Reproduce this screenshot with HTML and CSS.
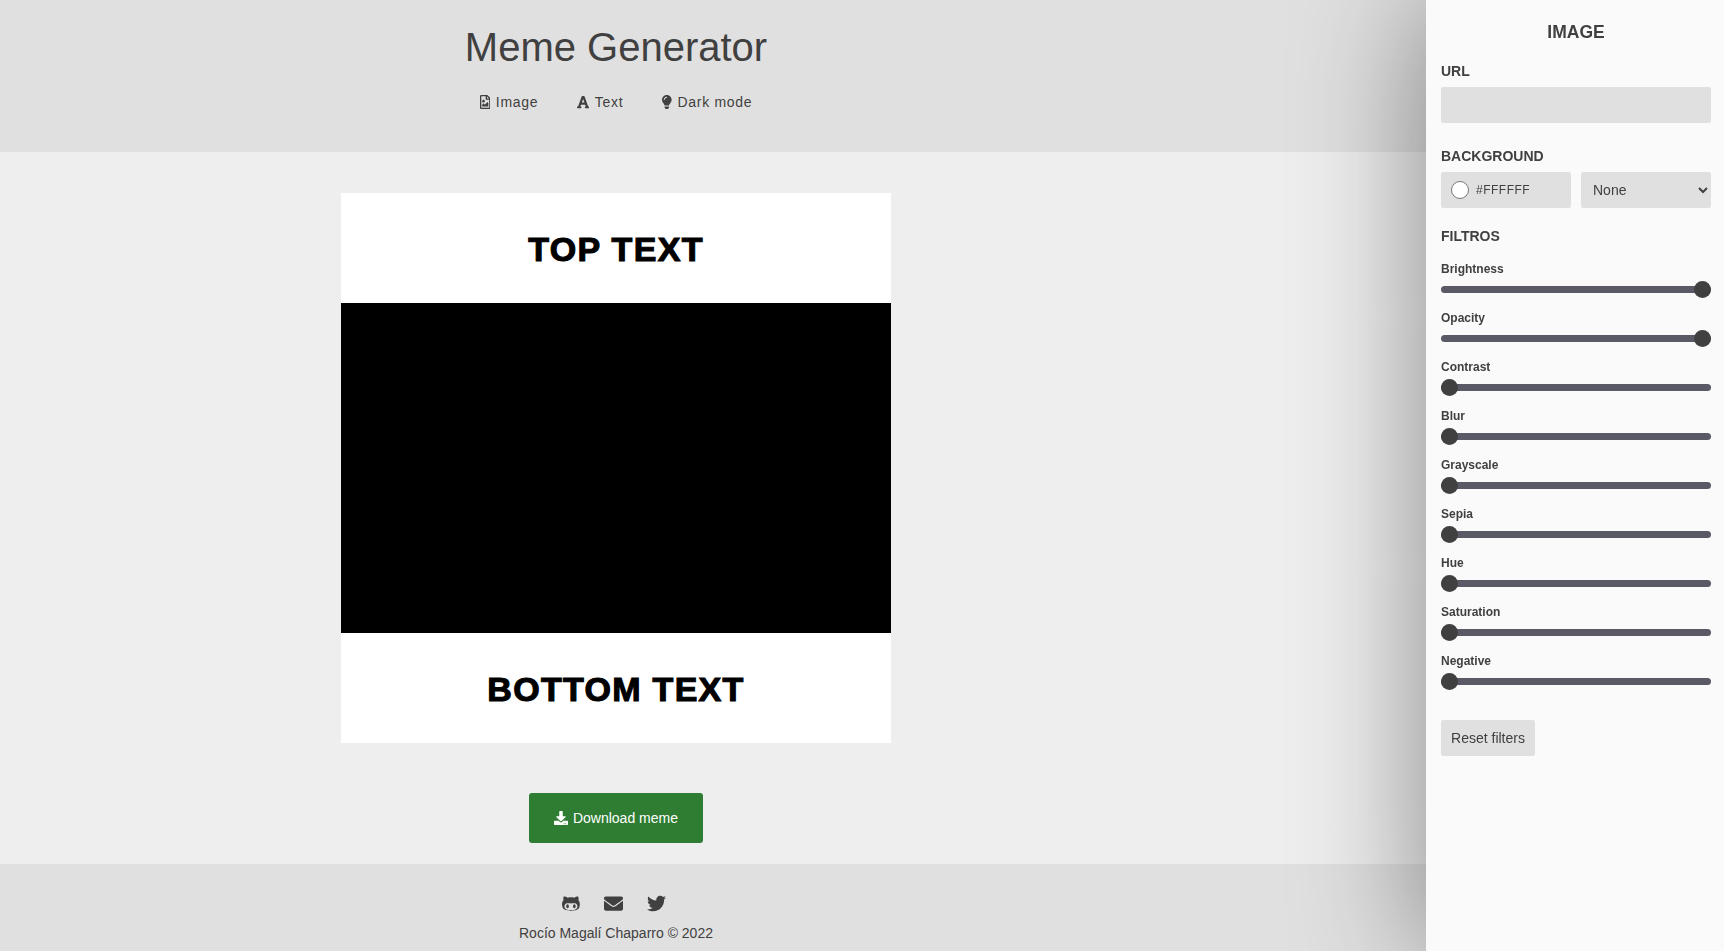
FILE: index.html
```html
<!DOCTYPE html>
<html lang="es">
<head>
    <meta charset="UTF-8">
    <meta name="viewport" content="width=device-width, initial-scale=1.0">
    <title>Meme Generator</title>
    <link rel="stylesheet" href="styles.css">
</head>
<body>
    <header class="header">
        <div class="inner">
            <h1>Meme Generator</h1>
            <nav class="nav">
                <a href="#">
                    <svg class="icon" viewBox="0 0 384 512"><path d="M369.9 97.9L286 14C277 5 264.8-.1 252.1-.1H48C21.5 0 0 21.5 0 48v416c0 26.5 21.5 48 48 48h288c26.5 0 48-21.5 48-48V131.9c0-12.7-5.1-25-14.1-34zM332.1 128H256V51.9l76.1 76.1zM48 464V48h160v104c0 13.3 10.7 24 24 24h104v288H48zm32-48h224V288l-23.5-23.5c-4.7-4.7-12.3-4.7-17 0L176 352l-39.5-39.5c-4.7-4.7-12.3-4.7-17 0L80 352v64zm48-240c-26.5 0-48 21.5-48 48s21.5 48 48 48 48-21.5 48-48-21.5-48-48-48z"/></svg>
                    Image
                </a>
                <a href="#">
                    <svg class="icon" viewBox="0 0 448 512"><path d="M432 416h-23.41L277.88 53.69A32 32 0 0 0 247.58 32h-47.16a32 32 0 0 0-30.3 21.69L39.41 416H16a16 16 0 0 0-16 16v32a16 16 0 0 0 16 16h128a16 16 0 0 0 16-16v-32a16 16 0 0 0-16-16h-19.6l23.3-64h152.6l23.3 64H304a16 16 0 0 0-16 16v32a16 16 0 0 0 16 16h128a16 16 0 0 0 16-16v-32a16 16 0 0 0-16-16zM176.85 272L224 142.51 271.15 272z"/></svg>
                    Text
                </a>
                <a href="#">
                    <svg class="icon" viewBox="0 0 352 512"><path d="M96.06 454.35c.01 6.29 1.87 12.45 5.36 17.69l17.09 25.69a31.99 31.99 0 0 0 26.64 14.28h61.71a31.99 31.99 0 0 0 26.64-14.28l17.09-25.69a31.989 31.989 0 0 0 5.36-17.69l.04-38.35H96.01l.05 38.35zM0 176c0 44.37 16.45 84.85 43.56 115.78 16.52 18.85 42.36 58.23 52.21 91.45.04.26.07.52.11.78h160.24c.04-.26.07-.51.11-.78 9.85-33.22 35.69-72.6 52.21-91.45C335.55 260.85 352 220.37 352 176 352 78.61 272.91-.3 175.45 0 73.44.31 0 82.97 0 176zm176-80c-44.11 0-80 35.89-80 80 0 8.84-7.16 16-16 16s-16-7.16-16-16c0-61.76 50.24-112 112-112 8.84 0 16 7.16 16 16s-7.16 16-16 16z"/></svg>
                    Dark mode
                </a>
            </nav>
        </div>
    </header>

    <main class="main">
        <div class="meme">
            <div class="meme-text">TOP TEXT</div>
            <div class="meme-image"></div>
            <div class="meme-text">BOTTOM TEXT</div>
        </div>
        <button class="download">
            <svg class="icon" viewBox="0 0 512 512"><path d="M216 0h80c13.3 0 24 10.7 24 24v168h87.7c17.8 0 26.7 21.5 14.1 34.1L269.7 378.3c-7.5 7.5-19.8 7.5-27.3 0L90.1 226.1c-12.6-12.6-3.7-34.1 14.1-34.1H192V24c0-13.3 10.7-24 24-24zm296 376v112c0 13.3-10.7 24-24 24H24c-13.3 0-24-10.7-24-24V376c0-13.3 10.7-24 24-24h146.7l49 49c20.1 20.1 52.5 20.1 72.6 0l49-49H488c13.3 0 24 10.7 24 24zm-124 88c0-11-9-20-20-20s-20 9-20 20 9 20 20 20 20-9 20-20zm64 0c0-11-9-20-20-20s-20 9-20 20 9 20 20 20 20-9 20-20z"/></svg>
            Download meme
        </button>
    </main>

    <footer class="footer">
        <div class="inner">
            <div class="social">
                <svg class="icon" viewBox="0 0 480 512"><path d="M186.1 328.7c0 20.9-10.9 55.1-36.7 55.1s-36.7-34.2-36.7-55.1 10.9-55.1 36.7-55.1 36.7 34.2 36.7 55.1zM480 278.2c0 31.9-3.2 65.7-17.5 95-37.9 76.6-142.1 74.8-216.7 74.8-75.8 0-186.2 2.7-225.6-74.8-14.6-29-20.2-63.1-20.2-95 0-41.9 13.9-81.5 41.5-113.6-5.2-15.8-7.7-32.4-7.7-48.8 0-21.5 4.9-32.3 14.6-51.8 45.3 0 74.3 9 108.8 36 29-6.9 58.8-10 88.7-10 27 0 54.2 2.9 80.4 9.2 34-26.7 63-35.2 107.8-35.2 9.8 19.5 14.6 30.3 14.6 51.8 0 16.4-2.6 32.7-7.7 48.2 27.5 32.4 39 72.4 39 114.2zm-64.3 50.5c0-43.9-26.7-82.6-73.5-82.6-18.9 0-37 3.4-56 6-14.9 2.3-29.8 3.2-45.1 3.2-15.2 0-30.1-.9-45.1-3.2-18.7-2.6-37-6-56-6-46.8 0-73.5 38.7-73.5 82.6 0 87.8 80.4 101.3 150.4 101.3h48.2c70.3 0 150.6-13.4 150.6-101.3zm-82.6-55.1c-25.8 0-36.7 34.2-36.7 55.1s10.9 55.1 36.7 55.1 36.7-34.2 36.7-55.1-10.9-55.1-36.7-55.1z"/></svg>
                <svg class="icon" viewBox="0 0 512 512"><path d="M502.3 190.8c3.9-3.1 9.7-.2 9.7 4.7V400c0 26.5-21.5 48-48 48H48c-26.5 0-48-21.5-48-48V195.6c0-5 5.7-7.8 9.7-4.7 22.4 17.4 52.1 39.5 154.1 113.6 21.1 15.4 56.7 47.8 92.2 47.6 35.7.3 72-32.8 92.3-47.6 102-74.1 131.6-96.3 154-113.7zM256 320c23.2.4 56.6-29.2 73.4-41.4 132.7-96.3 142.8-104.7 173.4-128.7 5.8-4.5 9.2-11.5 9.2-18.9v-19c0-26.5-21.5-48-48-48H48C21.5 64 0 85.5 0 112v19c0 7.4 3.4 14.3 9.2 18.9 30.6 23.9 40.7 32.4 173.4 128.7 16.8 12.2 50.2 41.8 73.4 41.4z"/></svg>
                <svg class="icon" viewBox="0 0 512 512"><path d="M459.37 151.716c.325 4.548.325 9.097.325 13.645 0 138.72-105.583 298.558-298.558 298.558-59.452 0-114.68-17.219-161.137-47.106 8.447.974 16.568 1.299 25.34 1.299 49.055 0 94.213-16.568 130.274-44.832-46.132-.975-84.792-31.188-98.112-72.772 6.498.974 12.995 1.624 19.818 1.624 9.421 0 18.843-1.3 27.614-3.573-48.081-9.747-84.143-51.98-84.143-102.985v-1.299c13.969 7.797 30.214 12.67 47.431 13.319-28.264-18.843-46.781-51.005-46.781-87.391 0-19.492 5.197-37.36 14.294-52.954 51.655 63.675 129.3 105.258 216.365 109.807-1.624-7.797-2.599-15.918-2.599-24.04 0-57.828 46.782-104.934 104.934-104.934 30.213 0 57.502 12.67 76.67 33.137 23.715-4.548 46.456-13.32 66.599-25.34-7.798 24.366-24.366 44.833-46.132 57.827 21.117-2.273 41.584-8.122 60.426-16.243-14.292 20.791-32.161 39.308-52.628 54.253z"/></svg>
            </div>
            <p class="credit">Rocío Magalí Chaparro © 2022</p>
        </div>
    </footer>

    <aside class="panel">
        <h2>IMAGE</h2>
        <h3>URL</h3>
        <input class="field" type="text">
        <h3 class="section">BACKGROUND</h3>
        <div class="bg-row">
            <div class="field color-field">
                <span class="swatch"></span>
                <span>#FFFFFF</span>
            </div>
            <select class="field">
                <option>None</option>
            </select>
        </div>
        <h3 class="section filters-title">FILTROS</h3>
        <div class="filter">
            <label>Brightness</label>
            <input type="range" min="0" max="100" value="100">
        </div>
        <div class="filter">
            <label>Opacity</label>
            <input type="range" min="0" max="100" value="100">
        </div>
        <div class="filter">
            <label>Contrast</label>
            <input type="range" min="0" max="100" value="0">
        </div>
        <div class="filter">
            <label>Blur</label>
            <input type="range" min="0" max="100" value="0">
        </div>
        <div class="filter">
            <label>Grayscale</label>
            <input type="range" min="0" max="100" value="0">
        </div>
        <div class="filter">
            <label>Sepia</label>
            <input type="range" min="0" max="100" value="0">
        </div>
        <div class="filter">
            <label>Hue</label>
            <input type="range" min="0" max="100" value="0">
        </div>
        <div class="filter">
            <label>Saturation</label>
            <input type="range" min="0" max="100" value="0">
        </div>
        <div class="filter">
            <label>Negative</label>
            <input type="range" min="0" max="100" value="0">
        </div>
        <button class="reset">Reset filters</button>
    </aside>
</body>
</html>
```

FILE: styles.css
```css
/* General Styles */
* {
    box-sizing: border-box;
}

body {
    margin: 0;
    background: #eeeeee;
    font-family: 'Liberation Sans', Arial, sans-serif;
    color: #404040;
    overflow: hidden;
}

.icon {
    height: 14px;
    width: auto;
    fill: currentColor;
    vertical-align: -2px;
}

/* Content stays left of the panel */
.inner,
.main {
    width: 1232px;
}

/* Header */
.header {
    background: #e0e0e0;
    height: 152px;
    padding-top: 25px;
}

.header h1 {
    margin: 0;
    font-size: 40px;
    font-weight: 400;
    line-height: 44px;
    text-align: center;
}

.nav {
    display: flex;
    justify-content: center;
    gap: 39px;
    margin-top: 25px;
}

.nav a {
    color: #404040;
    text-decoration: none;
    font-size: 14px;
    letter-spacing: 0.7px;
    line-height: 16px;
}

.nav .icon {
    margin-right: 1px;
}

/* Meme */
.main {
    height: 712px;
    padding-top: 41px;
    display: flex;
    flex-direction: column;
    align-items: center;
}

.meme {
    width: 550px;
    background: #fff;
}

.meme-text {
    height: 110px;
    padding-top: 2px;
    display: flex;
    align-items: center;
    justify-content: center;
    font-size: 34px;
    font-weight: 700;
    letter-spacing: 1.3px;
    color: #000;
    -webkit-text-stroke: 1.1px #000;
}

.meme-image {
    height: 330px;
    background: #000;
}

.download {
    margin-top: 50px;
    width: 174px;
    height: 50px;
    background: #2e7d32;
    color: #fff;
    border: none;
    border-radius: 3px;
    font-family: inherit;
    font-size: 14px;
}

.download .icon {
    margin-right: 1px;
}

/* Footer */
.footer {
    background: #e0e0e0;
    height: 87px;
    padding-top: 30px;
}

.social {
    display: flex;
    justify-content: center;
    gap: 24px;
    padding-right: 4px;
}

.social .icon {
    height: 19px;
    display: block;
}

.credit {
    margin: 12px 0 0;
    font-size: 14px;
    line-height: 16px;
    text-align: center;
}

/* Side panel */
.panel {
    position: fixed;
    top: 0;
    right: 0;
    bottom: 0;
    width: 298px;
    padding: 24px 13px 0 15px;
    background: #fafafa;
    box-shadow: 0 0 130px rgba(0, 0, 0, 0.45);
}

.panel h2 {
    margin: 0;
    font-size: 17.5px;
    line-height: 17px;
    text-align: center;
}

.panel h3 {
    margin: 22px 0 0;
    font-size: 14px;
    line-height: 16px;
}

.panel h3.section {
    margin-top: 25px;
}

.panel h3.filters-title {
    margin-top: 20px;
}

.field {
    display: block;
    width: 100%;
    height: 36px;
    margin-top: 8px;
    background: #e0e0e0;
    color: #404040;
    border: none;
    border-radius: 2px;
    font-family: inherit;
    font-size: 14px;
    outline: none;
}

.bg-row {
    display: grid;
    grid-template-columns: 1fr 1fr;
    gap: 10px;
}

.bg-row select {
    padding-left: 8px;
}

.color-field {
    display: flex;
    align-items: center;
    gap: 7px;
    padding-left: 10px;
    font-size: 12px;
    letter-spacing: 0.5px;
}

.swatch {
    width: 18px;
    height: 18px;
    border-radius: 50%;
    background: #fff;
    border: 1px solid #777;
}

.filter {
    height: 49px;
    padding-top: 6px;
}

.filters-title + .filter {
    margin-top: 12px;
}

.filter label {
    display: block;
    font-size: 12px;
    font-weight: 700;
    line-height: 14px;
}

.filter input[type="range"] {
    -webkit-appearance: none;
    appearance: none;
    display: block;
    width: 100%;
    height: 17px;
    margin: 5px 0 0;
    background: transparent;
}

.filter input[type="range"]::-webkit-slider-runnable-track {
    height: 7px;
    border-radius: 4px;
    background: #5a5a66;
}

.filter input[type="range"]::-webkit-slider-thumb {
    -webkit-appearance: none;
    width: 17px;
    height: 17px;
    margin-top: -5px;
    border-radius: 50%;
    background: #404040;
}

.reset {
    display: block;
    margin-top: 23px;
    width: 94px;
    height: 36px;
    background: #e0e0e0;
    color: #404040;
    border: none;
    border-radius: 2px;
    font-family: inherit;
    font-size: 14px;
}
```
